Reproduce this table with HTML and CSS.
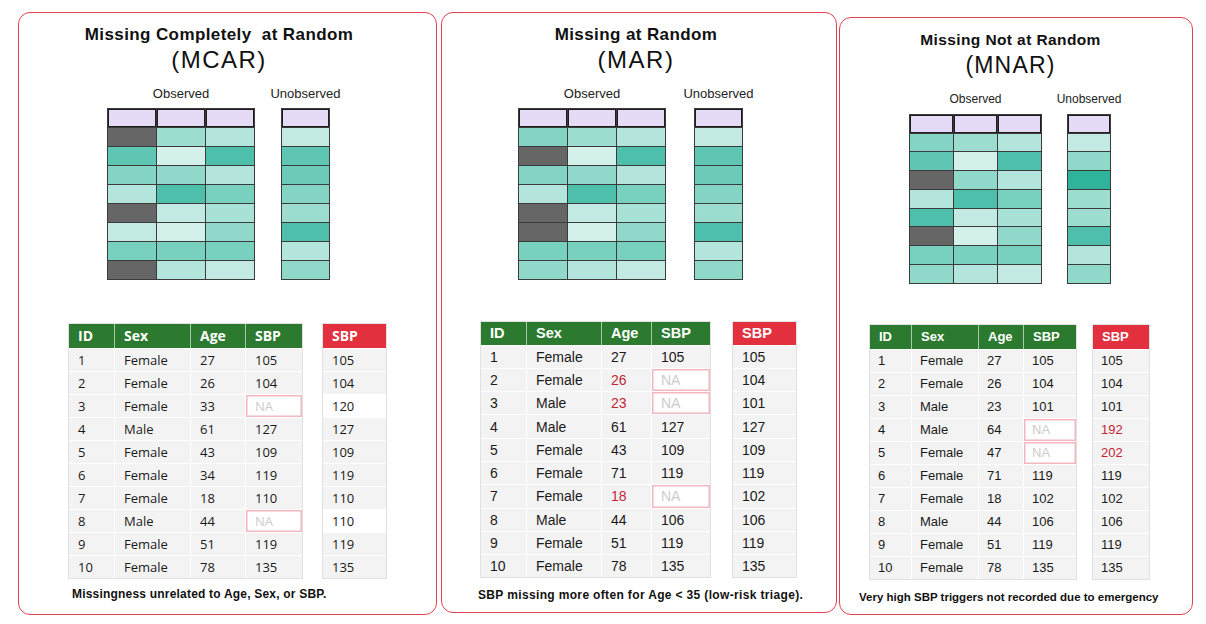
FILE: index.html
```html
<!DOCTYPE html>
<html>
<head>
<meta charset="utf-8">
<link rel="stylesheet" href="styles.css">
</head>
<body>
<div class="page">

  <section class="panel p1">
    <div class="head">
      <h1 class="title">Missing Completely&nbsp; at Random</h1>
      <div class="abbr">(MCAR)</div>
    </div>
    <div class="grids">
      <div class="gcol obs">
        <div class="glabel">Observed</div>
        <div class="grid g3">
          <i class="hd"></i><i class="hd"></i><i class="hd"></i>
          <i class="x"></i><i class="e"></i><i class="c"></i>
          <i class="j"></i><i class="a"></i><i class="k"></i>
          <i class="g"></i><i class="f"></i><i class="c"></i>
          <i class="c"></i><i class="k"></i><i class="h"></i>
          <i class="x"></i><i class="b"></i><i class="d"></i>
          <i class="b"></i><i class="a"></i><i class="f"></i>
          <i class="h"></i><i class="h"></i><i class="h"></i>
          <i class="x"></i><i class="c"></i><i class="b"></i>
        </div>
      </div>
      <div class="gcol unobs">
        <div class="glabel">Unobserved</div>
        <div class="grid g1">
          <i class="hd"></i>
          <i class="b"></i><i class="j"></i><i class="i"></i><i class="g"></i>
          <i class="e"></i><i class="k"></i><i class="c"></i><i class="f"></i>
        </div>
      </div>
    </div>
    <div class="tables">
      <table class="data main">
        <colgroup><col class="c-id"><col class="c-sex"><col class="c-age"><col class="c-sbp"></colgroup>
        <thead><tr><th>ID</th><th>Sex</th><th>Age</th><th>SBP</th></tr></thead>
        <tbody>
          <tr><td>1</td><td>Female</td><td>27</td><td>105</td></tr>
          <tr><td>2</td><td>Female</td><td>26</td><td>104</td></tr>
          <tr><td>3</td><td>Female</td><td>33</td><td class="na">NA</td></tr>
          <tr><td>4</td><td>Male</td><td>61</td><td>127</td></tr>
          <tr><td>5</td><td>Female</td><td>43</td><td>109</td></tr>
          <tr><td>6</td><td>Female</td><td>34</td><td>119</td></tr>
          <tr><td>7</td><td>Female</td><td>18</td><td>110</td></tr>
          <tr><td>8</td><td>Male</td><td>44</td><td class="na">NA</td></tr>
          <tr><td>9</td><td>Female</td><td>51</td><td>119</td></tr>
          <tr><td>10</td><td>Female</td><td>78</td><td>135</td></tr>
        </tbody>
      </table>
      <table class="data truth">
        <thead><tr><th>SBP</th></tr></thead>
        <tbody>
          <tr><td>105</td></tr><tr><td>104</td></tr><tr><td class="w">120</td></tr>
          <tr><td>127</td></tr><tr><td>109</td></tr><tr><td>119</td></tr>
          <tr><td>110</td></tr><tr><td class="w">110</td></tr><tr><td>119</td></tr>
          <tr><td>135</td></tr>
        </tbody>
      </table>
    </div>
    <p class="note">Missingness unrelated to Age, Sex, or SBP.</p>
  </section>

  <section class="panel p2">
    <div class="head">
      <h1 class="title">Missing at Random</h1>
      <div class="abbr">(MAR)</div>
    </div>
    <div class="grids">
      <div class="gcol obs">
        <div class="glabel">Observed</div>
        <div class="grid g3">
          <i class="hd"></i><i class="hd"></i><i class="hd"></i>
          <i class="g"></i><i class="e"></i><i class="c"></i>
          <i class="x"></i><i class="a"></i><i class="k"></i>
          <i class="g"></i><i class="f"></i><i class="c"></i>
          <i class="c"></i><i class="k"></i><i class="h"></i>
          <i class="x"></i><i class="b"></i><i class="d"></i>
          <i class="x"></i><i class="a"></i><i class="f"></i>
          <i class="h"></i><i class="h"></i><i class="h"></i>
          <i class="f"></i><i class="c"></i><i class="b"></i>
        </div>
      </div>
      <div class="gcol unobs">
        <div class="glabel">Unobserved</div>
        <div class="grid g1">
          <i class="hd"></i>
          <i class="b"></i><i class="j"></i><i class="i"></i><i class="g"></i>
          <i class="e"></i><i class="k"></i><i class="c"></i><i class="f"></i>
        </div>
      </div>
    </div>
    <div class="tables">
      <table class="data main">
        <colgroup><col class="c-id"><col class="c-sex"><col class="c-age"><col class="c-sbp"></colgroup>
        <thead><tr><th>ID</th><th>Sex</th><th>Age</th><th>SBP</th></tr></thead>
        <tbody>
          <tr><td>1</td><td>Female</td><td>27</td><td>105</td></tr>
          <tr><td>2</td><td>Female</td><td class="red">26</td><td class="na">NA</td></tr>
          <tr><td>3</td><td>Male</td><td class="red">23</td><td class="na">NA</td></tr>
          <tr><td>4</td><td>Male</td><td>61</td><td>127</td></tr>
          <tr><td>5</td><td>Female</td><td>43</td><td>109</td></tr>
          <tr><td>6</td><td>Female</td><td>71</td><td>119</td></tr>
          <tr><td>7</td><td>Female</td><td class="red">18</td><td class="na">NA</td></tr>
          <tr><td>8</td><td>Male</td><td>44</td><td>106</td></tr>
          <tr><td>9</td><td>Female</td><td>51</td><td>119</td></tr>
          <tr><td>10</td><td>Female</td><td>78</td><td>135</td></tr>
        </tbody>
      </table>
      <table class="data truth">
        <thead><tr><th>SBP</th></tr></thead>
        <tbody>
          <tr><td>105</td></tr><tr><td>104</td></tr><tr><td>101</td></tr>
          <tr><td>127</td></tr><tr><td>109</td></tr><tr><td>119</td></tr>
          <tr><td>102</td></tr><tr><td>106</td></tr><tr><td>119</td></tr>
          <tr><td>135</td></tr>
        </tbody>
      </table>
    </div>
    <p class="note">SBP missing more often for Age &lt; 35 (low-risk triage).</p>
  </section>

  <section class="panel p3">
    <div class="head">
      <h1 class="title">Missing Not at Random</h1>
      <div class="abbr">(MNAR)</div>
    </div>
    <div class="grids">
      <div class="gcol obs">
        <div class="glabel">Observed</div>
        <div class="grid g3">
          <i class="hd"></i><i class="hd"></i><i class="hd"></i>
          <i class="g"></i><i class="e"></i><i class="c"></i>
          <i class="j"></i><i class="a"></i><i class="k"></i>
          <i class="x"></i><i class="f"></i><i class="c"></i>
          <i class="c"></i><i class="k"></i><i class="h"></i>
          <i class="k"></i><i class="b"></i><i class="d"></i>
          <i class="x"></i><i class="a"></i><i class="f"></i>
          <i class="h"></i><i class="h"></i><i class="h"></i>
          <i class="f"></i><i class="c"></i><i class="b"></i>
        </div>
      </div>
      <div class="gcol unobs">
        <div class="glabel">Unobserved</div>
        <div class="grid g1">
          <i class="hd"></i>
          <i class="b"></i><i class="f"></i><i class="l"></i><i class="e"></i>
          <i class="e"></i><i class="k"></i><i class="c"></i><i class="f"></i>
        </div>
      </div>
    </div>
    <div class="tables">
      <table class="data main">
        <colgroup><col class="c-id"><col class="c-sex"><col class="c-age"><col class="c-sbp"></colgroup>
        <thead><tr><th>ID</th><th>Sex</th><th>Age</th><th>SBP</th></tr></thead>
        <tbody>
          <tr><td>1</td><td>Female</td><td>27</td><td>105</td></tr>
          <tr><td>2</td><td>Female</td><td>26</td><td>104</td></tr>
          <tr><td>3</td><td>Male</td><td>23</td><td>101</td></tr>
          <tr><td>4</td><td>Male</td><td>64</td><td class="na">NA</td></tr>
          <tr><td>5</td><td>Female</td><td>47</td><td class="na">NA</td></tr>
          <tr><td>6</td><td>Female</td><td>71</td><td>119</td></tr>
          <tr><td>7</td><td>Female</td><td>18</td><td>102</td></tr>
          <tr><td>8</td><td>Male</td><td>44</td><td>106</td></tr>
          <tr><td>9</td><td>Female</td><td>51</td><td>119</td></tr>
          <tr><td>10</td><td>Female</td><td>78</td><td>135</td></tr>
        </tbody>
      </table>
      <table class="data truth">
        <thead><tr><th>SBP</th></tr></thead>
        <tbody>
          <tr><td>105</td></tr><tr><td>104</td></tr><tr><td>101</td></tr>
          <tr><td class="red">192</td></tr><tr><td class="red">202</td></tr><tr><td>119</td></tr>
          <tr><td>102</td></tr><tr><td>106</td></tr><tr><td>119</td></tr>
          <tr><td>135</td></tr>
        </tbody>
      </table>
    </div>
    <p class="note">Very high SBP triggers not recorded due to emergency</p>
  </section>

</div>
</body>
</html>
```

FILE: styles.css
```css
html, body {
  margin: 0;
  background: #ffffff;
}

body {
  font-family: "Liberation Sans", Arial, sans-serif;
  color: #111111;
}

.page {
  display: flex;
  align-items: flex-start;
  padding: 12px 0 0 18px;
}

/* ---------- panels ---------- */
.panel {
  box-sizing: border-box;
  flex: none;
  display: flex;
  flex-direction: column;
  border: 1.5px solid #e2414f;
  border-radius: 12px;
  background: #ffffff;
}

.p1 { width: 419px; height: 603px; padding-top: 12px; }
.p2 { width: 396px; height: 601px; padding-top: 12px; margin-left: 4px; }
.p3 { width: 354px; height: 598px; padding-top: 12.5px; margin-left: 2px; margin-top: 5px; }

/* ---------- heading ---------- */
.head {
  display: flex;
  flex-direction: column;
  align-items: center;
  text-align: center;
  white-space: nowrap;
}

.p1 .head { width: 400px; }
.p2 .head { width: 388px; }
.p3 .head { width: 341px; }

.title {
  margin: 0;
  font-size: 17px;
  line-height: 20px;
  font-weight: bold;
  letter-spacing: 0.4px;
  color: #111111;
}

.abbr {
  margin-top: 1px;
  font-size: 24px;
  line-height: 28px;
  letter-spacing: 1.5px;
  color: #111111;
}

.p3 .title { font-size: 15.5px; line-height: 18px; }
.p3 .abbr { margin-top: 2px; font-size: 23px; letter-spacing: 1.2px; }

/* ---------- grid diagrams ---------- */
.grids {
  display: flex;
  align-items: flex-start;
  margin-top: 11.5px;
}

.p1 .grids { margin-left: 88px; gap: 26px; }
.p2 .grids { margin-left: 76px; gap: 28px; }
.p3 .grids { margin-left: 69px; gap: 25px; margin-top: 13px; }

.gcol {
  flex: none;
  display: flex;
  flex-direction: column;
  align-items: center;
}

.gcol.obs { width: 148px; }
.gcol.unobs { width: 49px; }
.p3 .gcol.obs { width: 133px; }
.p3 .gcol.unobs { width: 44px; }

.glabel {
  font-size: 13px;
  line-height: 16px;
  color: #222222;
  white-space: nowrap;
  margin-bottom: 6px;
}

.p3 .glabel { font-size: 12px; line-height: 15px; margin-bottom: 7px; }

.grid {
  display: grid;
  grid-template-rows: 18px;
  grid-auto-rows: 18px;
  gap: 1px;
  border: 1px solid #3b3b3b;
  background: #3b3b3b;
}

.grid.g3 { grid-template-columns: repeat(3, 48px); }
.grid.g1 { grid-template-columns: 47px; }
.p3 .grid { grid-auto-rows: 17.75px; }
.p3 .grid.g3 { grid-template-columns: repeat(3, 43px); }
.p3 .grid.g1 { grid-template-columns: 42px; }

.grid i {
  display: block;
}

.grid .hd {
  background: #e6dbf6;
  box-shadow: inset 0 0 0 1px #1e1e1e;
}

.grid .x { background: #666666; }
.grid .a { background: #d4f0ea; }
.grid .b { background: #c2eae3; }
.grid .c { background: #b3e5dc; }
.grid .d { background: #a8e1d6; }
.grid .e { background: #9dddd0; }
.grid .f { background: #90d8c9; }
.grid .g { background: #83d4c4; }
.grid .h { background: #78d0bf; }
.grid .i { background: #6ccbb8; }
.grid .j { background: #5ec6b3; }
.grid .k { background: #4dbfaa; }
.grid .l { background: #2fb39b; }

/* ---------- tables ---------- */
.tables {
  display: flex;
  align-items: flex-start;
}

.p1 .tables { margin-top: 43px; margin-left: 49px; gap: 19px; }
.p2 .tables { margin-top: 41px; margin-left: 38px; gap: 21px; }
.p3 .tables { margin-top: 40px; margin-left: 29px; gap: 15px; }

.data {
  border-collapse: separate;
  border-spacing: 0;
  table-layout: fixed;
  border: 1px solid #e1e1e1;
  font-size: 13px;
  color: #1a1a1a;
}

.p1 .data { font-family: "Open Sans", "Liberation Sans", sans-serif; }
.p2 .data { font-size: 14px; }

.data th {
  height: 24px;
  box-sizing: border-box;
  padding: 0 0 0 9px;
  text-align: left;
  font-weight: bold;
  color: #ffffff;
  background: #2b7a2f;
  border-left: 1.5px solid #a9c9ab;
}

.data th:first-child { border-left: 0; }
.p1 .data th { font-size: 14px; }
.p2 .data th { font-size: 14.5px; height: 23px; }

.data.truth th {
  background: #e2303f;
}

.data td {
  height: 23px;
  box-sizing: border-box;
  padding: 0 0 0 9px;
  background: #f3f3f3;
  border-left: 1.5px solid #ffffff;
  border-top: 1px solid #ffffff;
  white-space: nowrap;
}

.data td:first-child { border-left: 0; }
.p2 .data td { height: 23.3px; }
.p3 .data td { padding-left: 8px; }

.data td.na {
  background: #ffffff;
  color: #cccccc;
  box-shadow: inset 0 0 0 1.5px #f3b7c0;
}

.data td.w { background: #ffffff; }
.data td.red { color: #c42637; }

.p1 .main { width: 233px; }
.p1 .truth { width: 65px; }
.p1 .c-id { width: 45px; }
.p1 .c-sex { width: 76px; }
.p1 .c-age { width: 55px; }
.p1 .c-sbp { width: 57px; }

.p2 .main { width: 229px; }
.p2 .truth { width: 65px; }
.p2 .c-id { width: 45px; }
.p2 .c-sex { width: 75px; }
.p2 .c-age { width: 50px; }
.p2 .c-sbp { width: 59px; }

.p3 .main { width: 206px; }
.p3 .truth { width: 58px; }
.p3 .c-id { width: 41px; }
.p3 .c-sex { width: 67px; }
.p3 .c-age { width: 45px; }
.p3 .c-sbp { width: 53px; }

/* ---------- notes ---------- */
.note {
  margin: 8.5px 0 0 0;
  font-size: 12px;
  line-height: 14px;
  font-weight: bold;
  color: #111111;
  white-space: nowrap;
}

.p1 .note { margin-left: 53px; letter-spacing: 0.2px; }
.p2 .note { margin-left: 36px; letter-spacing: 0.35px; margin-top: 10px; }
.p3 .note { margin-left: 19px; font-size: 11.5px; margin-top: 10px; }
```
